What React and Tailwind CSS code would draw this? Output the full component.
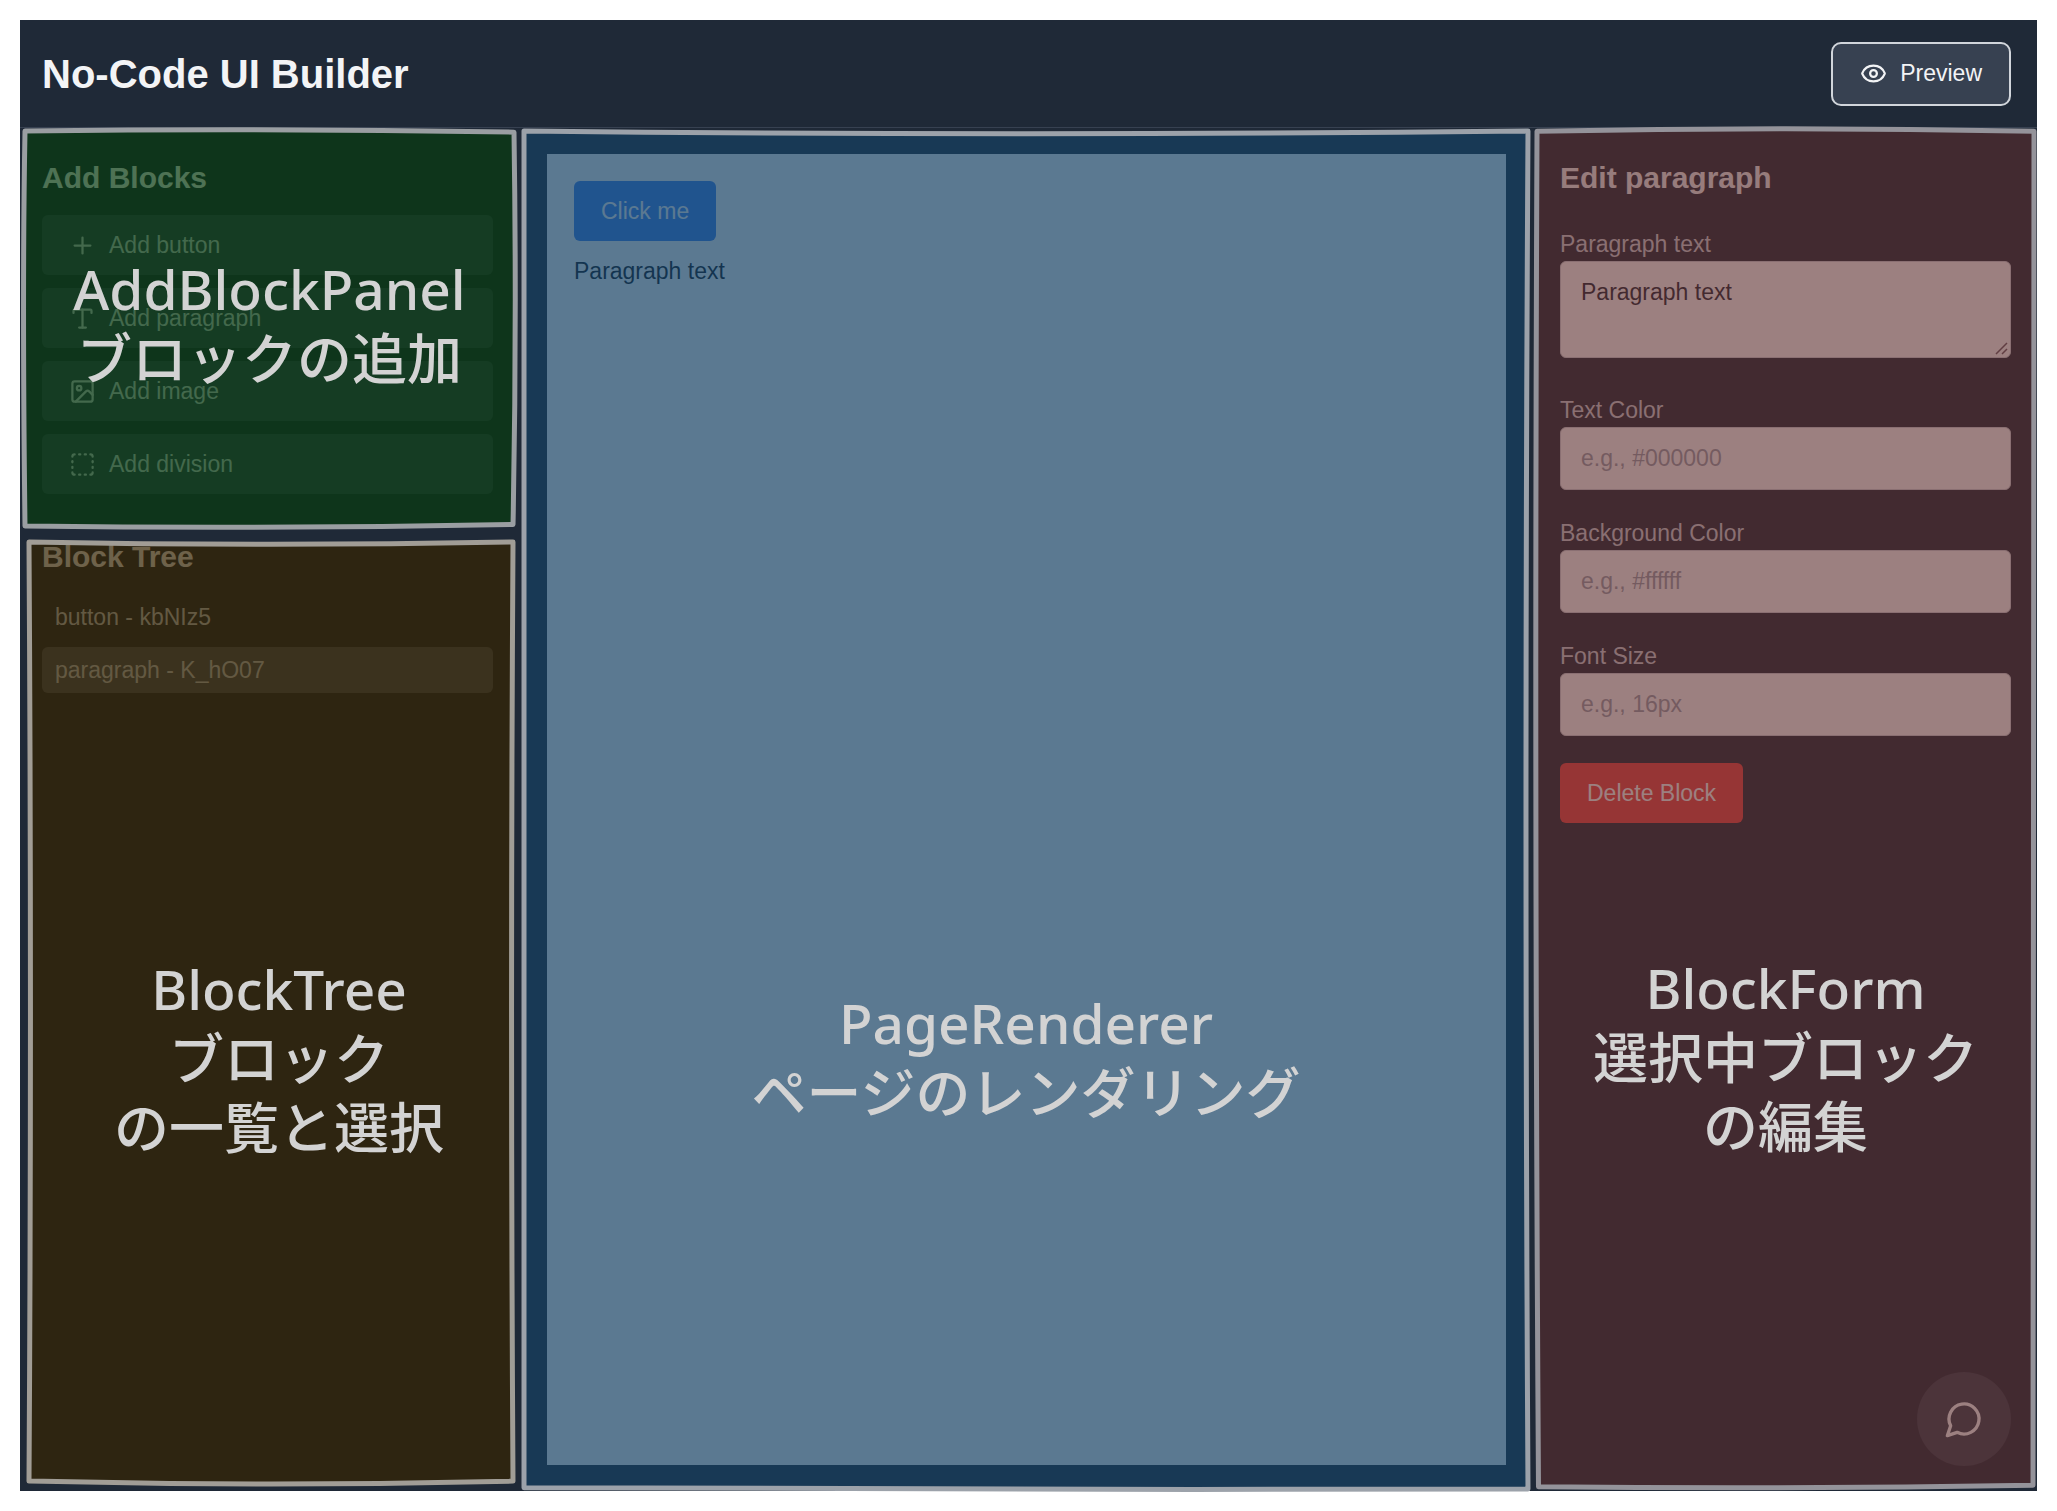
import React from "react";
import { Plus, Type, Image as ImageIcon, SquareDashed, Eye } from "lucide-react";

const BLOCKS = [
  { label: "Add button", Icon: Plus },
  { label: "Add paragraph", Icon: Type },
  { label: "Add image", Icon: ImageIcon },
  { label: "Add division", Icon: SquareDashed },
];

const TREE = [
  { label: "button - kbNIz5", selected: false },
  { label: "paragraph - K_hO07", selected: true },
];

const FIELDS = [
  { id: "text-color", label: "Text Color", placeholder: "e.g., #000000" },
  { id: "bg-color", label: "Background Color", placeholder: "e.g., #ffffff" },
  { id: "font-size", label: "Font Size", placeholder: "e.g., 16px" },
];

/* Sketchy tinted rectangle with a caption, laid over one region of the builder. */
function Annotation({ place, fill, opacity, stroke, bow, caption, lines }) {
  return (
    <div className={`pointer-events-none absolute z-10 ${place}`}>
      <svg
        className="absolute inset-0 size-full overflow-visible"
        viewBox="0 0 100 100"
        preserveAspectRatio="none"
        aria-hidden="true"
      >
        <path d={bow} fill={fill} fillOpacity={opacity} />
        <path
          d={bow}
          fill="none"
          stroke={stroke}
          strokeWidth="5"
          strokeLinejoin="round"
          vectorEffect="non-scaling-stroke"
        />
      </svg>
      <div
        className={`relative flex h-full flex-col items-center justify-center text-center font-['Noto_Sans','Noto_Sans_CJK_JP',sans-serif] text-[55px] leading-[69px] font-medium whitespace-nowrap text-[#d3d3d3] ${caption}`}
      >
        {lines.map((line) => (
          <span key={line}>{line}</span>
        ))}
      </div>
    </div>
  );
}

function Header() {
  return (
    <header className="flex h-[108px] shrink-0 items-center justify-between border-b border-[#374151] pr-[26px] pl-[22px]">
      <h1 className="text-[40px] leading-[48px] font-bold text-[#f3f4f6]">No-Code UI Builder</h1>
      <button
        type="button"
        className="flex h-16 items-center gap-[13px] rounded-[10px] border-2 border-[#d1d5db] bg-[#374151] px-[27px] text-[23px] text-[#f3f4f6]"
      >
        <Eye size={27} />
        Preview
      </button>
    </header>
  );
}

function Sidebar() {
  return (
    <aside className="relative w-[500px] shrink-0 pt-[26px] pr-[27px] pl-[22px]">
      <section>
        <h2 className="mb-[14px] text-[30px] leading-[47px] font-bold text-[#f3f4f6]">Add Blocks</h2>
        <div className="flex flex-col gap-[13px]">
          {BLOCKS.map(({ label, Icon }) => (
            <button
              key={label}
              type="button"
              className="flex h-[60px] items-center gap-[13px] rounded-md bg-[#374151] px-[27px] text-[23px] text-[#d1d5db]"
            >
              <Icon size={27} />
              {label}
            </button>
          ))}
        </div>
      </section>
      <section className="pt-[39px]">
        <h2 className="mb-[14px] text-[30px] leading-[47px] font-bold text-[#f3f4f6]">Block Tree</h2>
        <ul className="flex flex-col gap-[7px]">
          {TREE.map(({ label, selected }) => (
            <li key={label}>
              <button
                type="button"
                className={`flex h-[46px] w-full items-center rounded-md px-[13px] text-[23px] text-[#d1d5db] ${
                  selected ? "bg-[#4b5563]" : ""
                }`}
              >
                {label}
              </button>
            </li>
          ))}
        </ul>
      </section>
      <Annotation
        place="top-[3px] left-[5px] right-[6px] h-[395px]"
        fill="#073a0f"
        opacity={0.7}
        stroke="#9a9ea2"
        bow="M0 0 Q50 -0.8 100 0.3 Q100.6 50 99.8 99.6 Q50 100.8 0 100 Q-0.6 40 0 0 Z"
        caption="pb-3"
        lines={["AddBlockPanel", "ブロックの追加"]}
      />
      <Annotation
        place="top-[414px] left-[9px] right-[7px] bottom-[8px]"
        fill="#342302"
        opacity={0.7}
        stroke="#a19d96"
        bow="M0 0 Q50 0.5 100 0 Q99.4 50 100 99.8 Q50 100.4 0 99.8 Q0.6 50 0 0 Z"
        caption="pt-[90px] pl-4"
        lines={["BlockTree", "ブロック", "の一覧と選択"]}
      />
    </aside>
  );
}

function Canvas() {
  return (
    <main className="relative flex min-w-0 flex-1 flex-col px-[27px] py-[26px]">
      <div className="flex-1 bg-white p-[27px]">
        <button type="button" className="h-[60px] rounded-md bg-[#3b82f6] px-[27px] text-[23px] text-white">
          Click me
        </button>
        <p className="mt-[13px] text-[23px] leading-[35px] text-[#111827]">Paragraph text</p>
      </div>
      <Annotation
        place="top-[3px] left-[4px] right-[5px] bottom-[2px]"
        fill="#164062"
        opacity={0.7}
        stroke="#9ca2aa"
        bow="M0 0 Q50 0.4 100 0 Q99.6 50 100 100 Q50 100.1 0 99.9 Q0.3 50 0 0 Z"
        caption="pt-[494px]"
        lines={["PageRenderer", "ページのレンダリング"]}
      />
    </main>
  );
}

function BlockForm() {
  return (
    <aside className="relative w-[504px] shrink-0 pt-[26px] pr-[26px] pl-[27px]">
      <h2 className="mb-[27px] text-[30px] leading-[47px] font-bold text-[#f3f4f6]">Edit paragraph</h2>
      <form className="text-[23px]">
        <label htmlFor="paragraph-text" className="block leading-[33px] text-[#d1d5db]">
          Paragraph text
        </label>
        <div className="relative mb-9">
          <textarea
            id="paragraph-text"
            defaultValue="Paragraph text"
            className="block h-[97px] w-full resize-none rounded-md border border-[#d1d5db] bg-white px-5 py-[14px] leading-[33px] text-[#1f2937]"
          />
          <svg
            className="absolute right-[3px] bottom-[3px]"
            width="13"
            height="13"
            viewBox="0 0 13 13"
            fill="none"
            stroke="#6b5a66"
            strokeWidth="1.5"
            aria-hidden="true"
          >
            <path d="M1 12 12 1M7 12l5-5" />
          </svg>
        </div>
        {FIELDS.map(({ id, label, placeholder }) => (
          <div key={id} className="mb-[27px]">
            <label htmlFor={id} className="block leading-[33px] text-[#d1d5db]">
              {label}
            </label>
            <input
              id={id}
              type="text"
              placeholder={placeholder}
              className="block h-[63px] w-full rounded-md border border-[#d1d5db] bg-white px-5 text-[#1f2937] placeholder:text-[#9ca3af]"
            />
          </div>
        ))}
        <button type="button" className="h-[60px] rounded-md bg-[#ef4444] px-[27px] text-white">
          Delete Block
        </button>
      </form>
      <button
        type="button"
        aria-label="Open chat"
        className="absolute right-[26px] bottom-[25px] flex size-[94px] items-center justify-center rounded-full bg-[#374151] text-white"
      >
        <svg
          width="40"
          height="40"
          viewBox="0 0 24 24"
          fill="none"
          stroke="currentColor"
          strokeWidth="2"
          strokeLinecap="round"
          strokeLinejoin="round"
          aria-hidden="true"
        >
          <path d="M7.9 20A9 9 0 1 0 4 16.1L2 22Z" />
        </svg>
      </button>
      <Annotation
        place="top-[2px] left-[4px] right-[3px] bottom-[3px]"
        fill="#5a2b2b"
        opacity={0.6}
        stroke="#94939a"
        bow="M0 0.1 Q50 -0.3 100 0.1 Q100.4 50 99.8 99.8 Q50 100.1 0.3 99.9 Q-0.6 50 0 0.1 Z"
        caption="pt-[494px]"
        lines={["BlockForm", "選択中ブロック", "の編集"]}
      />
    </aside>
  );
}

export default function App() {
  return (
    <div className="flex min-h-screen flex-col bg-white p-5 font-['Liberation_Sans',Arial,sans-serif]">
      <div className="flex flex-1 flex-col bg-[#1f2937]">
        <Header />
        <div className="flex flex-1">
          <Sidebar />
          <Canvas />
          <BlockForm />
        </div>
      </div>
    </div>
  );
}
